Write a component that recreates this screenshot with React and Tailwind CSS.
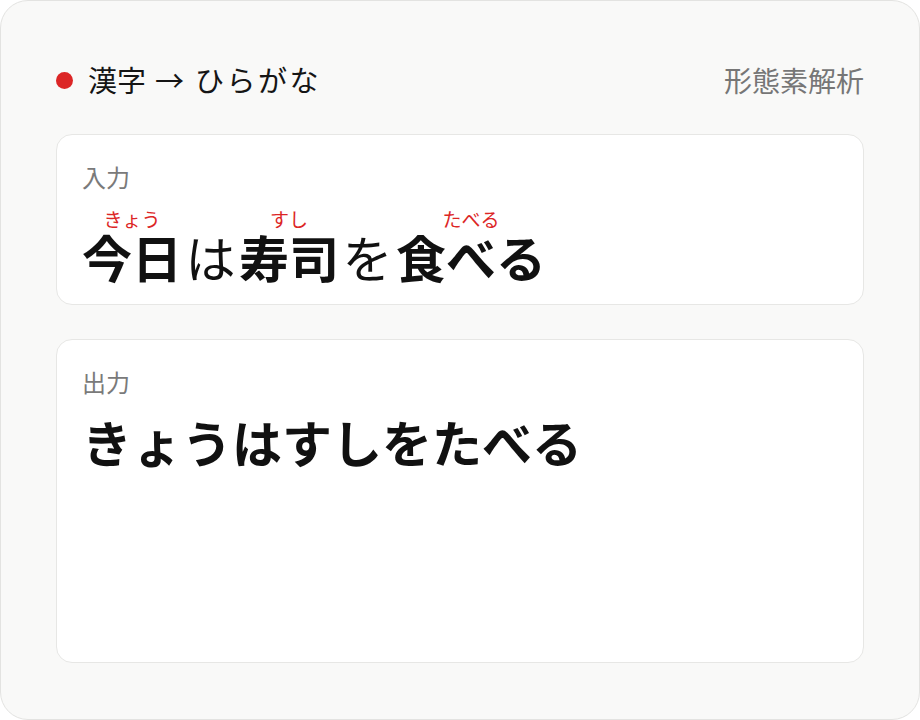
import React from 'react';

const jp = { fontFamily: '"Noto Sans CJK JP", "Noto Sans", sans-serif' };

const segments = [
  { base: '今日', ruby: 'きょう' },
  { base: 'は' },
  { base: '寿司', ruby: 'すし' },
  { base: 'を' },
  { base: '食べる', ruby: 'たべる' },
];

const Card = ({ label, className, children }) => (
  <div className={`bg-white border border-[#e7e7e5] rounded-[16px] px-[25px] pt-[26px] ${className}`}>
    <div className="text-[24px] leading-[32px] text-[#7a7a7a]">{label}</div>
    {children}
  </div>
);

export default function App() {
  return (
    <div style={jp} className="w-[920px] h-[720px] bg-[#f9f9f8] border border-[#e3e3e1] rounded-[28px] px-[55px] pt-[55px] pb-[56px] flex flex-col">
      <div className="h-12 flex items-center justify-between mb-[30px]">
        <div className="flex items-center gap-[15px]">
          <span className="w-[17px] h-[17px] rounded-full bg-[#dc2626]" />
          <span className="text-[29px] text-[#151515] flex items-center">
            <span>漢字</span>
            <span className="ml-[9px] mr-[11px]">→</span>
            <span className="tracking-[2.5px]">ひらがな</span>
          </span>
        </div>
        <span className="text-[28px] text-[#767676]">形態素解析</span>
      </div>

      <div className="flex-1 flex flex-col gap-[34px]">
        <Card label="入力" className="h-[171px]">
          <div className="mt-[12px] text-[50px] leading-[64px] text-[#111]">
            {segments.map((s, i) =>
              s.ruby ? (
                <ruby key={i} className="font-bold [ruby-align:center]">
                  {s.base}
                  <rt className="text-[19px] font-normal text-[#dc2626] leading-[22px] pb-[2px]">{s.ruby}</rt>
                </ruby>
              ) : (
                <span key={i} className="font-normal mx-[3.5px]">{s.base}</span>
              )
            )}
          </div>
        </Card>

        <Card label="出力" className="flex-1">
          <div className="mt-[13px] text-[50px] leading-[60px] font-bold text-[#111]">
            きょうはすしをたべる
          </div>
        </Card>
      </div>
    </div>
  );
}
